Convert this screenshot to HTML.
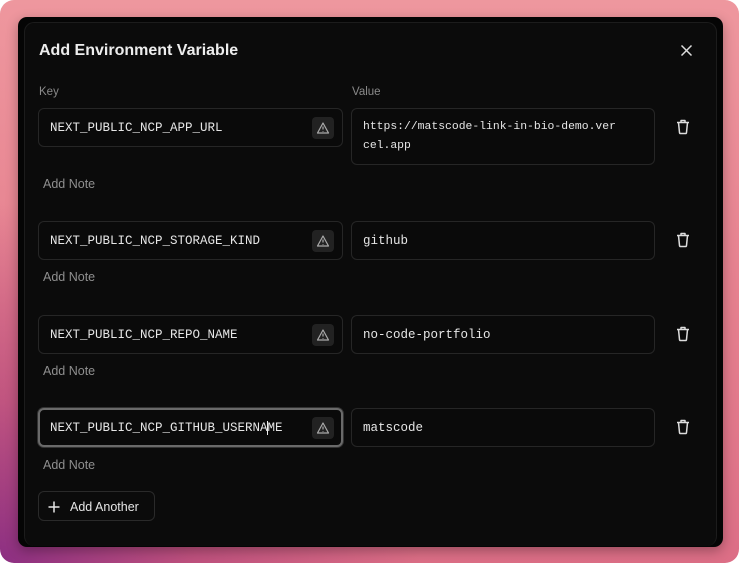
<!DOCTYPE html>
<html><head><style>
*{box-sizing:border-box;margin:0;padding:0}
html{background:#fff}
body{width:739px;height:563px;overflow:hidden;background:#fff;font-family:"Liberation Sans",sans-serif;position:relative}
.frame{position:absolute;left:0;top:0;width:739px;height:563px;border-radius:14px;background:radial-gradient(ellipse 420px 360px at 0% 100%,#8c2f82 0%,rgba(170,60,120,.6) 45%,rgba(220,110,140,0) 100%),linear-gradient(180deg,#ee979e 0%,#e57f8e 55%,#dc6e86 100%)}
.win{position:absolute;left:18px;top:17px;width:705px;height:530px;background:#050505;border-radius:9px;box-shadow:0 4px 12px rgba(0,0,0,.3)}
.modal{position:absolute;left:24px;top:22px;width:693px;height:524px;background:#0b0b0b;border:1px solid #1c1c1c;border-radius:10px;border-bottom:none}
.t{position:absolute;left:39px;top:42px;color:#ededed;font-size:16px;font-weight:bold}
.x{position:absolute;left:680px;top:44px}
.lbl{position:absolute;top:86px;color:#8a8a8a;font-size:11.5px}
.in{position:absolute;border:1px solid #262626;border-radius:6px;background:#0a0a0a;color:#e6e6e6;font-family:"Liberation Mono",monospace;font-size:12.5px}
.k{left:38px;width:305px;height:39px;padding:12px 0 0 11px}
.v{left:351px;width:304px;height:39px;padding:12px 0 0 11px}
.w{position:absolute;right:8px;top:8px;width:22px;height:22px;background:#222;border-radius:4px}
.w svg{position:absolute;left:4px;top:4px}
.note{position:absolute;left:43px;color:#8f8f8f;font-size:12.5px}
.tr{position:absolute;left:676px}
.btn{position:absolute;left:38px;top:491px;width:117px;height:30px;border:1px solid #2a2a2a;border-radius:6px;color:#e6e6e6;font-size:12.5px;padding:8px 0 0 31px}
</style></head><body>
<div class="frame"></div>
<div class="win"></div>
<div class="modal"></div>
<div class="t">Add Environment Variable</div>
<svg class="x" width="13" height="13" viewBox="0 0 13 13"><path d="M1.5 1.5L11.5 11.5M11.5 1.5L1.5 11.5" stroke="#ddd" stroke-width="1.5"/></svg>
<div class="lbl" style="left:39px">Key</div>
<div class="lbl" style="left:352px">Value</div>

<div class="in k" style="top:108px">NEXT_PUBLIC_NCP_APP_URL<div class="w"><svg width="14" height="14" viewBox="0 0 14 14"><path d="M7 2L12.5 12H1.5Z" fill="none" stroke="#aaa" stroke-width="1.2" stroke-linejoin="round"/><path d="M7 5.5V8.5M7 10v.6" stroke="#aaa" stroke-width="1.2"/></svg></div></div>
<div class="in v" style="top:108px;height:57px;font-size:11.4px;line-height:19px;padding-top:9px">https://matscode-link-in-bio-demo.ver<br>cel.app</div>
<div class="note" style="top:177px">Add Note</div>

<div class="in k" style="top:221px">NEXT_PUBLIC_NCP_STORAGE_KIND<div class="w"><svg width="14" height="14" viewBox="0 0 14 14"><path d="M7 2L12.5 12H1.5Z" fill="none" stroke="#aaa" stroke-width="1.2" stroke-linejoin="round"/><path d="M7 5.5V8.5M7 10v.6" stroke="#aaa" stroke-width="1.2"/></svg></div></div>
<div class="in v" style="top:221px">github</div>
<div class="note" style="top:270px">Add Note</div>

<div class="in k" style="top:315px">NEXT_PUBLIC_NCP_REPO_NAME<div class="w"><svg width="14" height="14" viewBox="0 0 14 14"><path d="M7 2L12.5 12H1.5Z" fill="none" stroke="#aaa" stroke-width="1.2" stroke-linejoin="round"/><path d="M7 5.5V8.5M7 10v.6" stroke="#aaa" stroke-width="1.2"/></svg></div></div>
<div class="in v" style="top:315px">no-code-portfolio</div>
<div class="note" style="top:364px">Add Note</div>

<div class="in k" style="top:408px;border:2px solid #6a6a6a;box-shadow:0 0 0 1px #333;padding:11px 0 0 10px">NEXT_PUBLIC_NCP_GITHUB_USERNA<span style="border-left:1px solid #eee;margin-left:-1px"></span>ME<div class="w" style="right:7px;top:7px"><svg width="14" height="14" viewBox="0 0 14 14"><path d="M7 2L12.5 12H1.5Z" fill="none" stroke="#aaa" stroke-width="1.2" stroke-linejoin="round"/><path d="M7 5.5V8.5M7 10v.6" stroke="#aaa" stroke-width="1.2"/></svg></div></div>
<div class="in v" style="top:408px">matscode</div>
<div class="note" style="top:458px">Add Note</div>

<svg class="tr" style="top:119px" width="14" height="16" viewBox="0 0 14 16"><path d="M1 3.5H13M5 3.5V1.5H9V3.5M2.5 3.5L3.5 13.5Q3.6 14.5 4.5 14.5H9.5Q10.4 14.5 10.5 13.5L11.5 3.5" fill="none" stroke="#ddd" stroke-width="1.5" stroke-linejoin="round"/></svg>
<svg class="tr" style="top:232px" width="14" height="16" viewBox="0 0 14 16"><path d="M1 3.5H13M5 3.5V1.5H9V3.5M2.5 3.5L3.5 13.5Q3.6 14.5 4.5 14.5H9.5Q10.4 14.5 10.5 13.5L11.5 3.5" fill="none" stroke="#ddd" stroke-width="1.5" stroke-linejoin="round"/></svg>
<svg class="tr" style="top:326px" width="14" height="16" viewBox="0 0 14 16"><path d="M1 3.5H13M5 3.5V1.5H9V3.5M2.5 3.5L3.5 13.5Q3.6 14.5 4.5 14.5H9.5Q10.4 14.5 10.5 13.5L11.5 3.5" fill="none" stroke="#ddd" stroke-width="1.5" stroke-linejoin="round"/></svg>
<svg class="tr" style="top:419px" width="14" height="16" viewBox="0 0 14 16"><path d="M1 3.5H13M5 3.5V1.5H9V3.5M2.5 3.5L3.5 13.5Q3.6 14.5 4.5 14.5H9.5Q10.4 14.5 10.5 13.5L11.5 3.5" fill="none" stroke="#ddd" stroke-width="1.5" stroke-linejoin="round"/></svg>

<div class="btn"><svg style="position:absolute;left:9px;top:9px" width="12" height="12" viewBox="0 0 12 12"><path d="M6 0.5V11.5M0.5 6H11.5" stroke="#e6e6e6" stroke-width="1.5"/></svg>Add Another</div>
</body></html>
